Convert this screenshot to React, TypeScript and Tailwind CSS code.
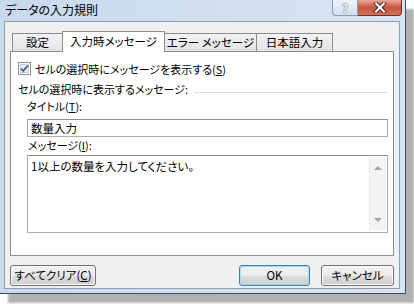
import React from 'react'

const jp = "font-['Noto_Sans_CJK_JP','Liberation_Sans',sans-serif] [font-feature-settings:'palt']"

const Tab: React.FC<{ label: string; width: string; active?: boolean }> = ({ label, width, active }) => {
  if (active) {
    return (
      <div
        className={`${width} h-[21px] -ml-px -mb-px relative z-10 flex items-center justify-center whitespace-nowrap border border-b-0 border-[#898c95] bg-white text-[11.5px] leading-none text-black`}
      >
        {label}
      </div>
    )
  }
  return (
    <div
      className={`${width} h-[18px] -ml-px flex items-center justify-center whitespace-nowrap border border-b-0 border-[#898c95] bg-gradient-to-b from-[#f3f3f3] to-[#e3e3e3] text-[11.5px] leading-none text-black`}
    >
      {label}
    </div>
  )
}

const Button: React.FC<{ width: string; primary?: boolean; children: React.ReactNode }> = ({ width, primary, children }) => (
  <div
    className={`${width} h-[21px] rounded-[3px] border ${
      primary ? 'border-[#3c7fb1] shadow-[inset_0_0_0_1px_#9fdcf8]' : 'border-[#707070] shadow-[inset_0_0_0_1px_#fbfbfb]'
    } bg-[linear-gradient(to_bottom,#f2f2f2_0%,#ebebeb_50%,#dddddd_51%,#cfcfcf_100%)] flex items-center justify-center whitespace-nowrap text-[11.5px] leading-none text-black`}
  >
    {children}
  </div>
)

const App: React.FC = () => {
  return (
    <div className={`w-[414px] h-[304px] bg-white overflow-hidden ${jp}`}>
      <div className="w-[406px] h-[294px] flex flex-col border-r border-b border-[#3b4a5c] bg-[linear-gradient(to_right,#c9daee,#d9e5f3)] shadow-[8px_9px_2px_rgba(0,0,0,0.3)]">
        {/* title bar */}
        <div className="h-[21px] flex items-start">
          <div className="pl-[5px] pt-[3px] text-[12px] leading-[14px] text-black">データの入力規則</div>
          <div className="ml-auto mr-[3px] flex">
            <div className="w-[26px] h-[16px] rounded-bl-[4px] border border-t-0 border-[#8a9bb0] bg-gradient-to-b from-[#eef3fa] to-[#d3e0f0] flex items-center justify-center">
              <span className="text-[12px] leading-none font-bold text-[#f8fbff] [text-shadow:0_0_1px_#4a5a6e,0_0_1px_#4a5a6e]">?</span>
            </div>
            <div className="w-[44px] h-[16px] rounded-br-[4px] border border-l-0 border-t-0 border-[#7a2d24] bg-gradient-to-b from-[#e8a597] via-[#c9543f] to-[#d0705c] flex items-center justify-center">
              <svg width="14" height="11" viewBox="0 0 14 11">
                <path d="M3 1.5 L11 9.5 M11 1.5 L3 9.5" stroke="#4b2a26" strokeWidth="4" strokeLinecap="square" />
                <path d="M3 1.5 L11 9.5 M11 1.5 L3 9.5" stroke="#ffffff" strokeWidth="2" strokeLinecap="square" />
              </svg>
            </div>
          </div>
        </div>

        {/* client area */}
        <div className="flex-1 ml-[4px] mr-[5px] mb-[4px] border border-[#8d9db2] bg-[#f0f0f0] flex flex-col">
          {/* tabs */}
          <div className="mt-[9px] ml-[8px] h-[20px] flex items-end">
            <Tab label="設定" width="w-[51px]" />
            <Tab label="入力時メッセージ" width="w-[103px]" active />
            <Tab label="エラー メッセージ" width="w-[93px]" />
            <Tab label="日本語入力" width="w-[77px]" />
          </div>

          {/* tab page */}
          <div className="ml-[5px] w-[384px] h-[205px] border border-[#898c95] bg-white pl-[7px] pr-[5px] pt-[10px] flex flex-col text-[11px] leading-[14px] text-black">
            <div className="flex items-center h-[13px]">
              <svg width="13" height="13" viewBox="0 0 13 13">
                <rect x="0.5" y="0.5" width="12" height="12" fill="#ffffff" stroke="#8e8f8f" />
                <rect x="2.5" y="2.5" width="8" height="8" fill="#e6ecf3" stroke="#c2cbd6" />
                <path d="M3 6.5 L5.3 9 L10 3.5" fill="none" stroke="#3d5682" strokeWidth="1.8" />
              </svg>
              <span className="ml-[4px]">
                セルの選択時にメッセージを表示する(<span className="underline underline-offset-1">S</span>)
              </span>
            </div>

            <div className="mt-[7px] h-[14px] flex items-center">
              <span>セルの選択時に表示するメッセージ:</span>
              <div className="flex-1 ml-[6px] mt-[6px] h-px bg-[#d5dfe5]" />
            </div>

            <div className="mt-[3px] ml-[9px] h-[14px]">
              タイトル(<span className="underline underline-offset-1">T</span>):
            </div>
            <div className="mt-[6px] ml-[9px] h-[18px] border border-[#abadb3] border-t-[#8e8f94] bg-white flex items-center pl-[3px] text-[11.5px]">
              数量入力
            </div>

            <div className="mt-[1px] ml-[10px] h-[14px]">
              メッセージ(<span className="underline underline-offset-1">I</span>):
            </div>
            <div className="mt-[3px] ml-[9px] h-[78px] border border-[#abadb3] border-t-[#8e8f94] bg-white flex">
              <div className="flex-1 pl-[3px] pt-[3px] text-[11.5px]">1以上の数量を入力してください。</div>
              <div className="w-[17px] my-[2px] mr-px border border-[#ececec] bg-[#f4f4f4] flex flex-col items-center justify-between py-[7px]">
                <svg width="8" height="4" viewBox="0 0 8 4">
                  <path d="M0 4 L4 0 L8 4 Z" fill="#a3a3a3" />
                </svg>
                <svg width="8" height="4" viewBox="0 0 8 4">
                  <path d="M0 0 L4 4 L8 0 Z" fill="#a3a3a3" />
                </svg>
              </div>
            </div>
          </div>

          {/* buttons */}
          <div className="mt-[9px] ml-[5px] mr-[5px] flex items-center">
            <Button width="w-[86px]">
              すべてクリア(<span className="underline underline-offset-1">C</span>)
            </Button>
            <div className="ml-auto flex gap-[11px]">
              <Button width="w-[71px]" primary>
                OK
              </Button>
              <Button width="w-[73px]">キャンセル</Button>
            </div>
          </div>
        </div>
      </div>
    </div>
  )
}

export default App
